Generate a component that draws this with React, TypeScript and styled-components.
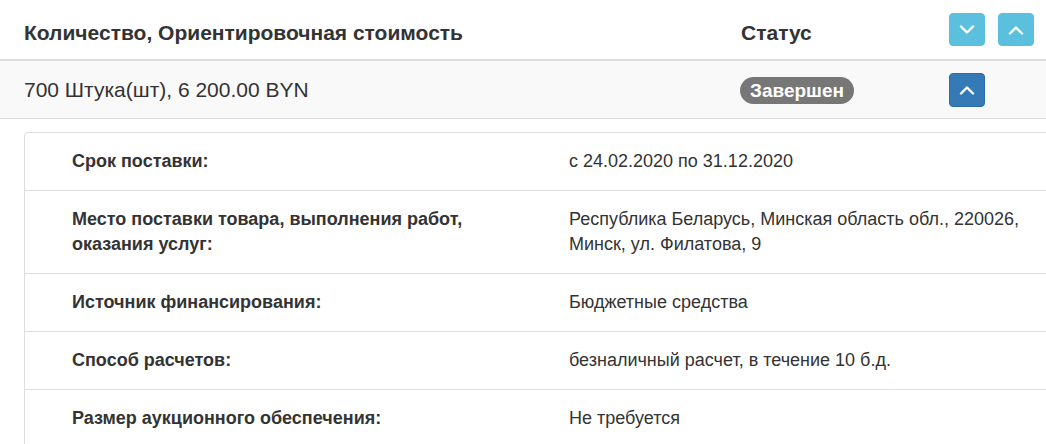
import React from "react";
import styled, { createGlobalStyle } from "styled-components";

const Global = createGlobalStyle`
  html, body { margin: 0; padding: 0; background: #fff; overflow: hidden; }
  body { font-family: "Liberation Sans", Arial, sans-serif; color: #333; }
`;

const Page = styled.div`
  width: 1046px;
`;

const HeadRow = styled.div`
  display: grid;
  grid-template-columns: 717px 208px 1fr;
  align-items: center;
  height: 59px;
  border-bottom: 2px solid #ddd;
`;

const Cell = styled.div`
  padding: 0 24px;
  display: flex;
  align-items: center;
  gap: 13px;
`;

const HeadText = styled.span`
  font-size: 21px;
  font-weight: bold;
  line-height: 24px;
  padding-top: 6px;
`;

const DataRow = styled.div`
  display: grid;
  grid-template-columns: 717px 208px 1fr;
  align-items: center;
  height: 57px;
  background: #f9f9f9;
  border-bottom: 1px solid #ddd;
`;

const DataText = styled.span`
  font-size: 21px;
  line-height: 24px;
`;

const IconButton = styled.button<{ $variant: "info" | "primary"; $h: number }>`
  width: 36px;
  height: ${(p) => p.$h}px;
  padding: 0;
  border-radius: 4px;
  border: 1px solid ${(p) => (p.$variant === "info" ? "#5bc0de" : "#2e6da4")};
  background: ${(p) => (p.$variant === "info" ? "#5bc0de" : "#337ab7")};
  display: flex;
  align-items: center;
  justify-content: center;
  cursor: pointer;
`;

const Badge = styled.span`
  display: inline-block;
  background: #777;
  color: #fff;
  font-weight: bold;
  font-size: 19px;
  line-height: 27px;
  height: 27px;
  padding: 0 10px;
  border-radius: 14px;
  margin-left: -1px;
  margin-top: 2px;
`;

const Card = styled.div`
  margin: 13px 0 0 24px;
  width: 1040px;
  border: 1px solid #ddd;
  border-radius: 4px;
  box-sizing: border-box;
`;

const InfoRow = styled.div`
  display: grid;
  grid-template-columns: 520px 1fr;
  & + & {
    border-top: 1px solid #ddd;
  }
`;

const Label = styled.div`
  padding: 16px 24px 16px 47px;
  font-size: 18px;
  font-weight: bold;
  line-height: 25px;
`;

const Value = styled.div`
  padding: 16px 24px;
  font-size: 18px;
  line-height: 25px;
`;

const Chevron = ({ dir }: { dir: "up" | "down" }) => (
  <svg width="16" height="10" viewBox="0 0 16 10">
    <polyline
      points={dir === "up" ? "2,8.5 8,2.5 14,8.5" : "2,1.5 8,7.5 14,1.5"}
      fill="none"
      stroke="#fff"
      strokeWidth="2.4"
      strokeLinecap="round"
      strokeLinejoin="round"
    />
  </svg>
);

const rows: [string, string][] = [
  ["Срок поставки:", "с 24.02.2020 по 31.12.2020"],
  [
    "Место поставки товара, выполнения работ, оказания услуг:",
    "Республика Беларусь, Минская область обл., 220026, Минск, ул. Филатова, 9",
  ],
  ["Источник финансирования:", "Бюджетные средства"],
  ["Способ расчетов:", "безналичный расчет, в течение 10 б.д."],
  ["Размер аукционного обеспечения:", "Не требуется"],
];

export default function App() {
  return (
    <Page>
      <Global />
      <HeadRow>
        <Cell>
          <HeadText>Количество, Ориентировочная стоимость</HeadText>
        </Cell>
        <Cell>
          <HeadText>Статус</HeadText>
        </Cell>
        <Cell>
          <IconButton $variant="info" $h={33}>
            <Chevron dir="down" />
          </IconButton>
          <IconButton $variant="info" $h={33}>
            <Chevron dir="up" />
          </IconButton>
        </Cell>
      </HeadRow>
      <DataRow>
        <Cell>
          <DataText>700 Штука(шт), 6 200.00 BYN</DataText>
        </Cell>
        <Cell>
          <Badge>Завершен</Badge>
        </Cell>
        <Cell>
          <IconButton $variant="primary" $h={34}>
            <Chevron dir="up" />
          </IconButton>
        </Cell>
      </DataRow>
      <Card>
        {rows.map(([l, v]) => (
          <InfoRow key={l}>
            <Label>{l}</Label>
            <Value>{v}</Value>
          </InfoRow>
        ))}
      </Card>
    </Page>
  );
}
